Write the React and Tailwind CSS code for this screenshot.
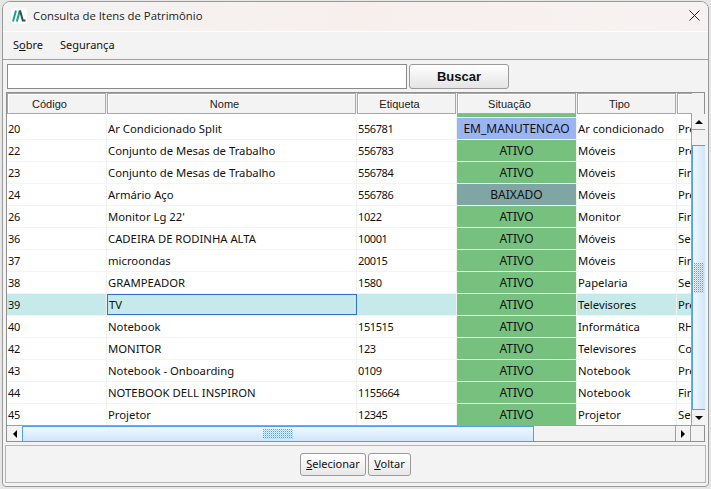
import React from 'react';

const ROWS = [
  ['20', 'Ar Condicionado Split', '556781', 'EM_MANUTENCAO', 'Ar condicionado', 'Predial'],
  ['22', 'Conjunto de Mesas de Trabalho', '556783', 'ATIVO', 'Móveis', 'Predial'],
  ['23', 'Conjunto de Mesas de Trabalho', '556784', 'ATIVO', 'Móveis', 'Financeiro'],
  ['24', 'Armário Aço', '556786', 'BAIXADO', 'Móveis', 'Predial'],
  ['26', "Monitor Lg 22'", '1022', 'ATIVO', 'Monitor', 'Financeiro'],
  ['36', 'CADEIRA DE RODINHA ALTA', '10001', 'ATIVO', 'Móveis', 'Secretaria'],
  ['37', 'microondas', '20015', 'ATIVO', 'Móveis', 'Financeiro'],
  ['38', 'GRAMPEADOR', '1580', 'ATIVO', 'Papelaria', 'Secretaria'],
  ['39', 'TV', '', 'ATIVO', 'Televisores', 'Predial'],
  ['40', 'Notebook', '151515', 'ATIVO', 'Informática', 'RH'],
  ['42', 'MONITOR', '123', 'ATIVO', 'Televisores', 'Comercial'],
  ['43', 'Notebook - Onboarding', '0109', 'ATIVO', 'Notebook', 'Predial'],
  ['44', 'NOTEBOOK DELL INSPIRON', '1155664', 'ATIVO', 'Notebook', 'Financeiro'],
  ['45', 'Projetor', '12345', 'ATIVO', 'Projetor', 'Secretaria'],
];

const STATUS_BG = {
  ATIVO: 'bg-[#76c17d]',
  EM_MANUTENCAO: 'bg-[#9bb5f3]',
  BAIXADO: 'bg-[#7fa5a5]',
};

const Grip = ({ w, h }) => (
  <svg width={w} height={h} className="block">
    <defs>
      <pattern id={`grip${w}`} width="2" height="2" patternUnits="userSpaceOnUse">
        <rect width="1" height="1" fill="#4da3ee" />
        <rect x="1" y="1" width="1" height="1" fill="#a9d3f7" />
      </pattern>
    </defs>
    <rect width={w} height={h} fill={`url(#grip${w})`} />
  </svg>
);

const Arrow = ({ dir }) => {
  const points = {
    up: '0,4 8,4 4,0',
    down: '0,0 8,0 4,4',
    left: '4,0 4,8 0,4',
    right: '0,0 0,8 4,4',
  };
  const vertical = dir === 'up' || dir === 'down';
  return (
    <svg width={vertical ? 8 : 4} height={vertical ? 4 : 8}>
      <polygon points={points[dir]} fill="#000" />
    </svg>
  );
};

const HeaderCell = ({ className, children }) => (
  <div className={`flex h-[21px] shrink-0 items-center justify-center border border-[#a8a8a8] bg-[#f3f3f3] pr-[14px] pt-px shadow-[inset_1px_1px_0_#fff] mr-px ${className}`}>
    {children}
  </div>
);

const Row = ({ row }) => {
  const [code, name, tag, status, type, sector] = row;
  const isSelected = code === '39';
  return (
    <div className={`flex h-[22px] shrink-0 border-b border-[#f4f4f4] text-[11.3px] text-[#111] ${isSelected ? 'bg-[#c6eaea]' : 'bg-white'}`}>
      <div className="flex w-[100px] shrink-0 items-center border-r border-[#f0f0f0] pl-[1px] pt-px text-[11px] tracking-[-0.4px]">{code}</div>
      <div className={`flex w-[250px] shrink-0 items-center pl-[1px] pt-px ${isSelected ? 'border border-[#2f6fd0]' : 'border-r border-[#f0f0f0]'}`}>{name}</div>
      <div className="flex w-[100px] shrink-0 items-center border-r border-[#f0f0f0] pl-[1px] pt-px text-[11px] tracking-[-0.4px]">{tag}</div>
      <div className={`flex w-[120px] shrink-0 items-center justify-center border-r border-[#f0f0f0] text-[12px] ${STATUS_BG[status]}`}>{status}</div>
      <div className="flex w-[100px] shrink-0 items-center border-r border-[#f0f0f0] pl-[1px] pt-px">{type}</div>
      <div className="flex w-[14px] shrink-0 items-center overflow-hidden whitespace-nowrap pl-[1px] pt-px">{sector}</div>
    </div>
  );
};

const App = () => (
  <div className="h-[489px] w-[711px] overflow-hidden bg-[#e6e6e6] pl-[2px] pr-[2px] pt-px font-['Noto_Sans',sans-serif]">
    <div className="flex h-[486px] flex-col overflow-hidden rounded-t-[8px] rounded-b-[4px] border border-[#9a9a9a] bg-[#f3f3f3]">
      <div className="flex h-[30px] shrink-0 items-center border-b border-white bg-gradient-to-r from-[#f3f3f3] via-[#f8efed] to-[#f7f2f2] pb-[2px] pl-[8px] pr-[8px]">
        <div className="flex h-[16px] w-[16px] items-center justify-center rounded-[3px] bg-white">
          <svg width="14" height="12" viewBox="0 0 14 12">
            <path d="M1 11.5 L4 0.5 M4.8 11.5 L7.8 0.5" stroke="#13a58c" strokeWidth="2" fill="none" />
            <path d="M8 0.5 L10.8 10.5 L13.5 10.5" stroke="#3c4a4a" strokeWidth="2" fill="none" />
          </svg>
        </div>
        <span className="ml-[6px] font-['Open_Sans',sans-serif] text-[11.35px] text-[#222]">Consulta de Itens de Patrimônio</span>
        <svg width="11" height="11" viewBox="0 0 11 11" className="ml-auto">
          <path d="M0.5 0.5 L10.5 10.5 M10.5 0.5 L0.5 10.5" stroke="#222" strokeWidth="1" />
        </svg>
      </div>

      <div className="flex h-[28px] shrink-0 items-center gap-[17px] border-b border-[#a0a0a0] pl-[10px] text-[11px] text-[#111]">
        <span>S<span className="underline">o</span>bre</span>
        <span>Segurança</span>
      </div>

      <div className="flex h-[32px] shrink-0 items-start gap-[2px] pl-[4px] pt-[4px]">
        <div className="h-[25px] w-[400px] border border-[#8a8a8a] bg-white" />
        <div className="flex h-[25px] w-[100px] items-center justify-center rounded-[3px] border border-[#9a9a9a] bg-gradient-to-b from-white to-[#e4e4e4] font-['Liberation_Sans',sans-serif] text-[13px] font-bold text-[#111]">
          Buscar
        </div>
      </div>

      <div className="ml-[3px] mr-[3px] flex h-[350px] shrink-0 flex-col border border-[#8f8f8f] bg-[#f3f3f3]">
        <div className="flex h-[21px] shrink-0 font-['Liberation_Sans',sans-serif] text-[11px] text-[#222]">
          <HeaderCell className="w-[99px]">Código</HeaderCell>
          <HeaderCell className="w-[249px]">Nome</HeaderCell>
          <HeaderCell className="w-[99px]">Etiqueta</HeaderCell>
          <HeaderCell className="w-[119px]">Situação</HeaderCell>
          <HeaderCell className="w-[99px]">Tipo</HeaderCell>
          <HeaderCell className="w-[14px] border-r-0" />
        </div>

        <div className="flex h-[311px] shrink-0">
          <div className="flex w-[684px] shrink-0 flex-col overflow-hidden bg-white">
            <div className="flex h-[4px] shrink-0">
              <div className="ml-[450px] h-[3px] w-[119px] bg-[#76c17d]" />
            </div>
            {ROWS.map((row) => (
              <Row key={row[0]} row={row} />
            ))}
          </div>
          <div className="flex w-[14px] shrink-0 flex-col border-l border-[#a0a0a0] bg-[#f3f3f3]">
            <div className="flex h-[16px] shrink-0 items-center justify-center border-b border-[#a0a0a0]">
              <Arrow dir="up" />
            </div>
            <div className="h-[15px] shrink-0" />
            <div className="flex h-[265px] shrink-0 items-center justify-center border-y border-l border-[#4da3ee] bg-gradient-to-r from-[#f1f8fe] to-[#cfe6fb]">
              <Grip w={10} h={30} />
            </div>
            <div className="flex h-[15px] shrink-0 items-center justify-center">
              <Arrow dir="down" />
            </div>
          </div>
        </div>

        <div className="flex h-[16px] shrink-0 border-t border-[#a0a0a0]">
          <div className="flex w-[15px] shrink-0 items-center justify-center">
            <Arrow dir="left" />
          </div>
          <div className="flex w-[512px] shrink-0 items-center justify-center border-x border-t border-[#4da3ee] bg-gradient-to-b from-[#f1f8fe] to-[#cfe6fb]">
            <Grip w={30} h={10} />
          </div>
          <div className="w-[141px] shrink-0" />
          <div className="flex w-[15px] shrink-0 items-center justify-center border-l border-[#a0a0a0]">
            <Arrow dir="right" />
          </div>
          <div className="flex-1 border-l border-[#a0a0a0]" />
        </div>
      </div>

      <div className="ml-[2px] mr-[2px] mt-[3px] flex h-[38px] shrink-0 items-start justify-center gap-[2px] border border-[#b5b5b5] pt-[7px] text-[11px] text-[#111]">
        <div className="flex h-[23px] w-[66px] items-center justify-center rounded-[3px] border border-[#9a9a9a] bg-gradient-to-b from-white to-[#e8e8e8]">
          <span><span className="underline">S</span>elecionar</span>
        </div>
        <div className="flex h-[23px] w-[43px] items-center justify-center rounded-[3px] border border-[#9a9a9a] bg-gradient-to-b from-white to-[#e8e8e8]">
          <span><span className="underline">V</span>oltar</span>
        </div>
      </div>
    </div>
  </div>
);

export default App;
